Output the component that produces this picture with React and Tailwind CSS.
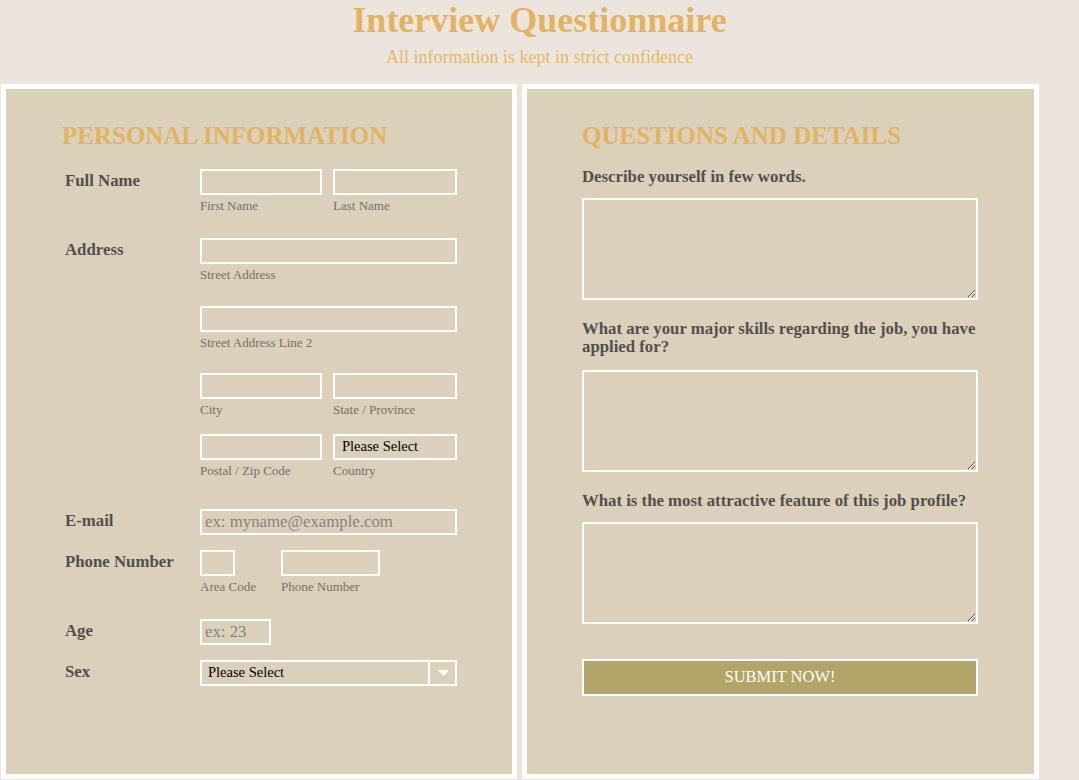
import React from 'react';

const serif = { fontFamily: '"Liberation Serif", "Times New Roman", serif' };

const inputCls =
  "block h-[26px] border-2 border-white bg-transparent px-[3px] text-[16.8px] text-[#333] placeholder:text-[#85857e] outline-none";

const Sub = ({ children }) => (
  <div className="mt-[3px] whitespace-nowrap text-[13px] leading-[16px] text-[#72726c]">{children}</div>
);

const Field = ({ width, sub, placeholder }) => (
  <div style={{ width }}>
    <input className={inputCls} style={{ width }} placeholder={placeholder} />
    {sub && <Sub>{sub}</Sub>}
  </div>
);

const Row = ({ label, mt, children }) => (
  <div className="flex items-start" style={{ marginTop: mt }}>
    <div className="ml-[59px] w-[135px] pt-[2px] text-[16.8px] font-bold leading-[20px] text-[#505050]">{label}</div>
    <div>{children}</div>
  </div>
);

const Question = ({ children, mt, gap }) => (
  <div style={{ marginTop: mt }}>
    <div className="text-[16.75px] font-bold leading-[18px] text-[#505050]">{children}</div>
    <textarea
      className="block h-[102px] w-[396px] border-2 border-white bg-transparent outline-none"
      style={{ marginTop: gap }}
    />
  </div>
);

export default function App() {
  return (
    <div className="min-h-[780px] bg-[#ece5de]" style={serif}>
      <div className="text-center">
        <h1 className="text-[36px] font-bold leading-[40px] text-[#e3b45d]">Interview Questionnaire</h1>
        <p className="mt-[7px] text-[18px] leading-[20px] text-[#e4b86c]">All information is kept in strict confidence</p>
      </div>

      <div className="mt-[17px] flex gap-[5px] pl-px">
        {/* left panel */}
        <div className="h-[695px] w-[516px] border-[5px] border-white bg-[#dbd0b9]">
          <h2 className="ml-[56px] mt-[34px] text-[25px] font-bold leading-[25px] text-[#e3b45d]">PERSONAL INFORMATION</h2>

          <Row label="Full Name" mt={21}>
            <div className="flex gap-[11px]">
              <Field width={122} sub="First Name" />
              <Field width={124} sub="Last Name" />
            </div>
          </Row>

          <Row label="Address" mt={24}>
            <Field width={257} sub="Street Address" />
            <div className="mt-[23px]">
              <Field width={257} sub="Street Address Line 2" />
            </div>
            <div className="mt-[22px] flex gap-[11px]">
              <Field width={122} sub="City" />
              <Field width={124} sub="State / Province" />
            </div>
            <div className="mt-[16px] flex gap-[11px]">
              <Field width={122} sub="Postal / Zip Code" />
              <div className="w-[124px]">
                <select className="block h-[26px] w-[124px] appearance-none border-2 border-white bg-transparent pl-[7px] text-[14.5px] text-black outline-none">
                  <option>Please Select</option>
                </select>
                <Sub>Country</Sub>
              </div>
            </div>
          </Row>

          <Row label="E-mail" mt={30}>
            <Field width={257} placeholder="ex: myname@example.com" />
          </Row>

          <Row label="Phone Number" mt={15}>
            <div className="flex gap-[46px]">
              <Field width={35} sub="Area Code" />
              <Field width={99} sub="Phone Number" />
            </div>
          </Row>

          <Row label="Age" mt={24}>
            <Field width={71} placeholder="ex: 23" />
          </Row>

          <Row label="Sex" mt={15}>
            <div className="relative h-[26px] w-[257px]">
              <select className="block h-[26px] w-[257px] appearance-none border-2 border-white bg-transparent pl-[6px] text-[14.5px] text-black outline-none">
                <option>Please Select</option>
              </select>
              <div className="pointer-events-none absolute right-0 top-0 flex h-[26px] w-[29px] items-center justify-center border-l-2 border-white">
                <svg width="11" height="6" viewBox="0 0 11 6">
                  <path d="M0 0 L11 0 L5.5 6 Z" fill="#ffffff" />
                </svg>
              </div>
            </div>
          </Row>
        </div>

        {/* right panel */}
        <div className="h-[695px] w-[517px] border-[5px] border-white bg-[#dbd0b9]">
          <div className="ml-[55px]">
            <h2 className="mt-[34px] text-[25px] font-bold leading-[25px] text-[#e3b45d]">QUESTIONS AND DETAILS</h2>
            <Question mt={20} gap={12}>Describe yourself in few words.</Question>
            <Question mt={20} gap={14}>
              <span className="block whitespace-nowrap">What are your major skills regarding the job, you have</span>
              applied for?
            </Question>
            <Question mt={20} gap={12}>What is the most attractive feature of this job profile?</Question>
            <button className="mt-[35px] flex h-[37px] w-[396px] items-center justify-center border-2 border-white bg-[#b3a468] pb-[2px] text-[16.5px] leading-[18px] text-white">
              SUBMIT NOW!
            </button>
          </div>
        </div>
      </div>
    </div>
  );
}
